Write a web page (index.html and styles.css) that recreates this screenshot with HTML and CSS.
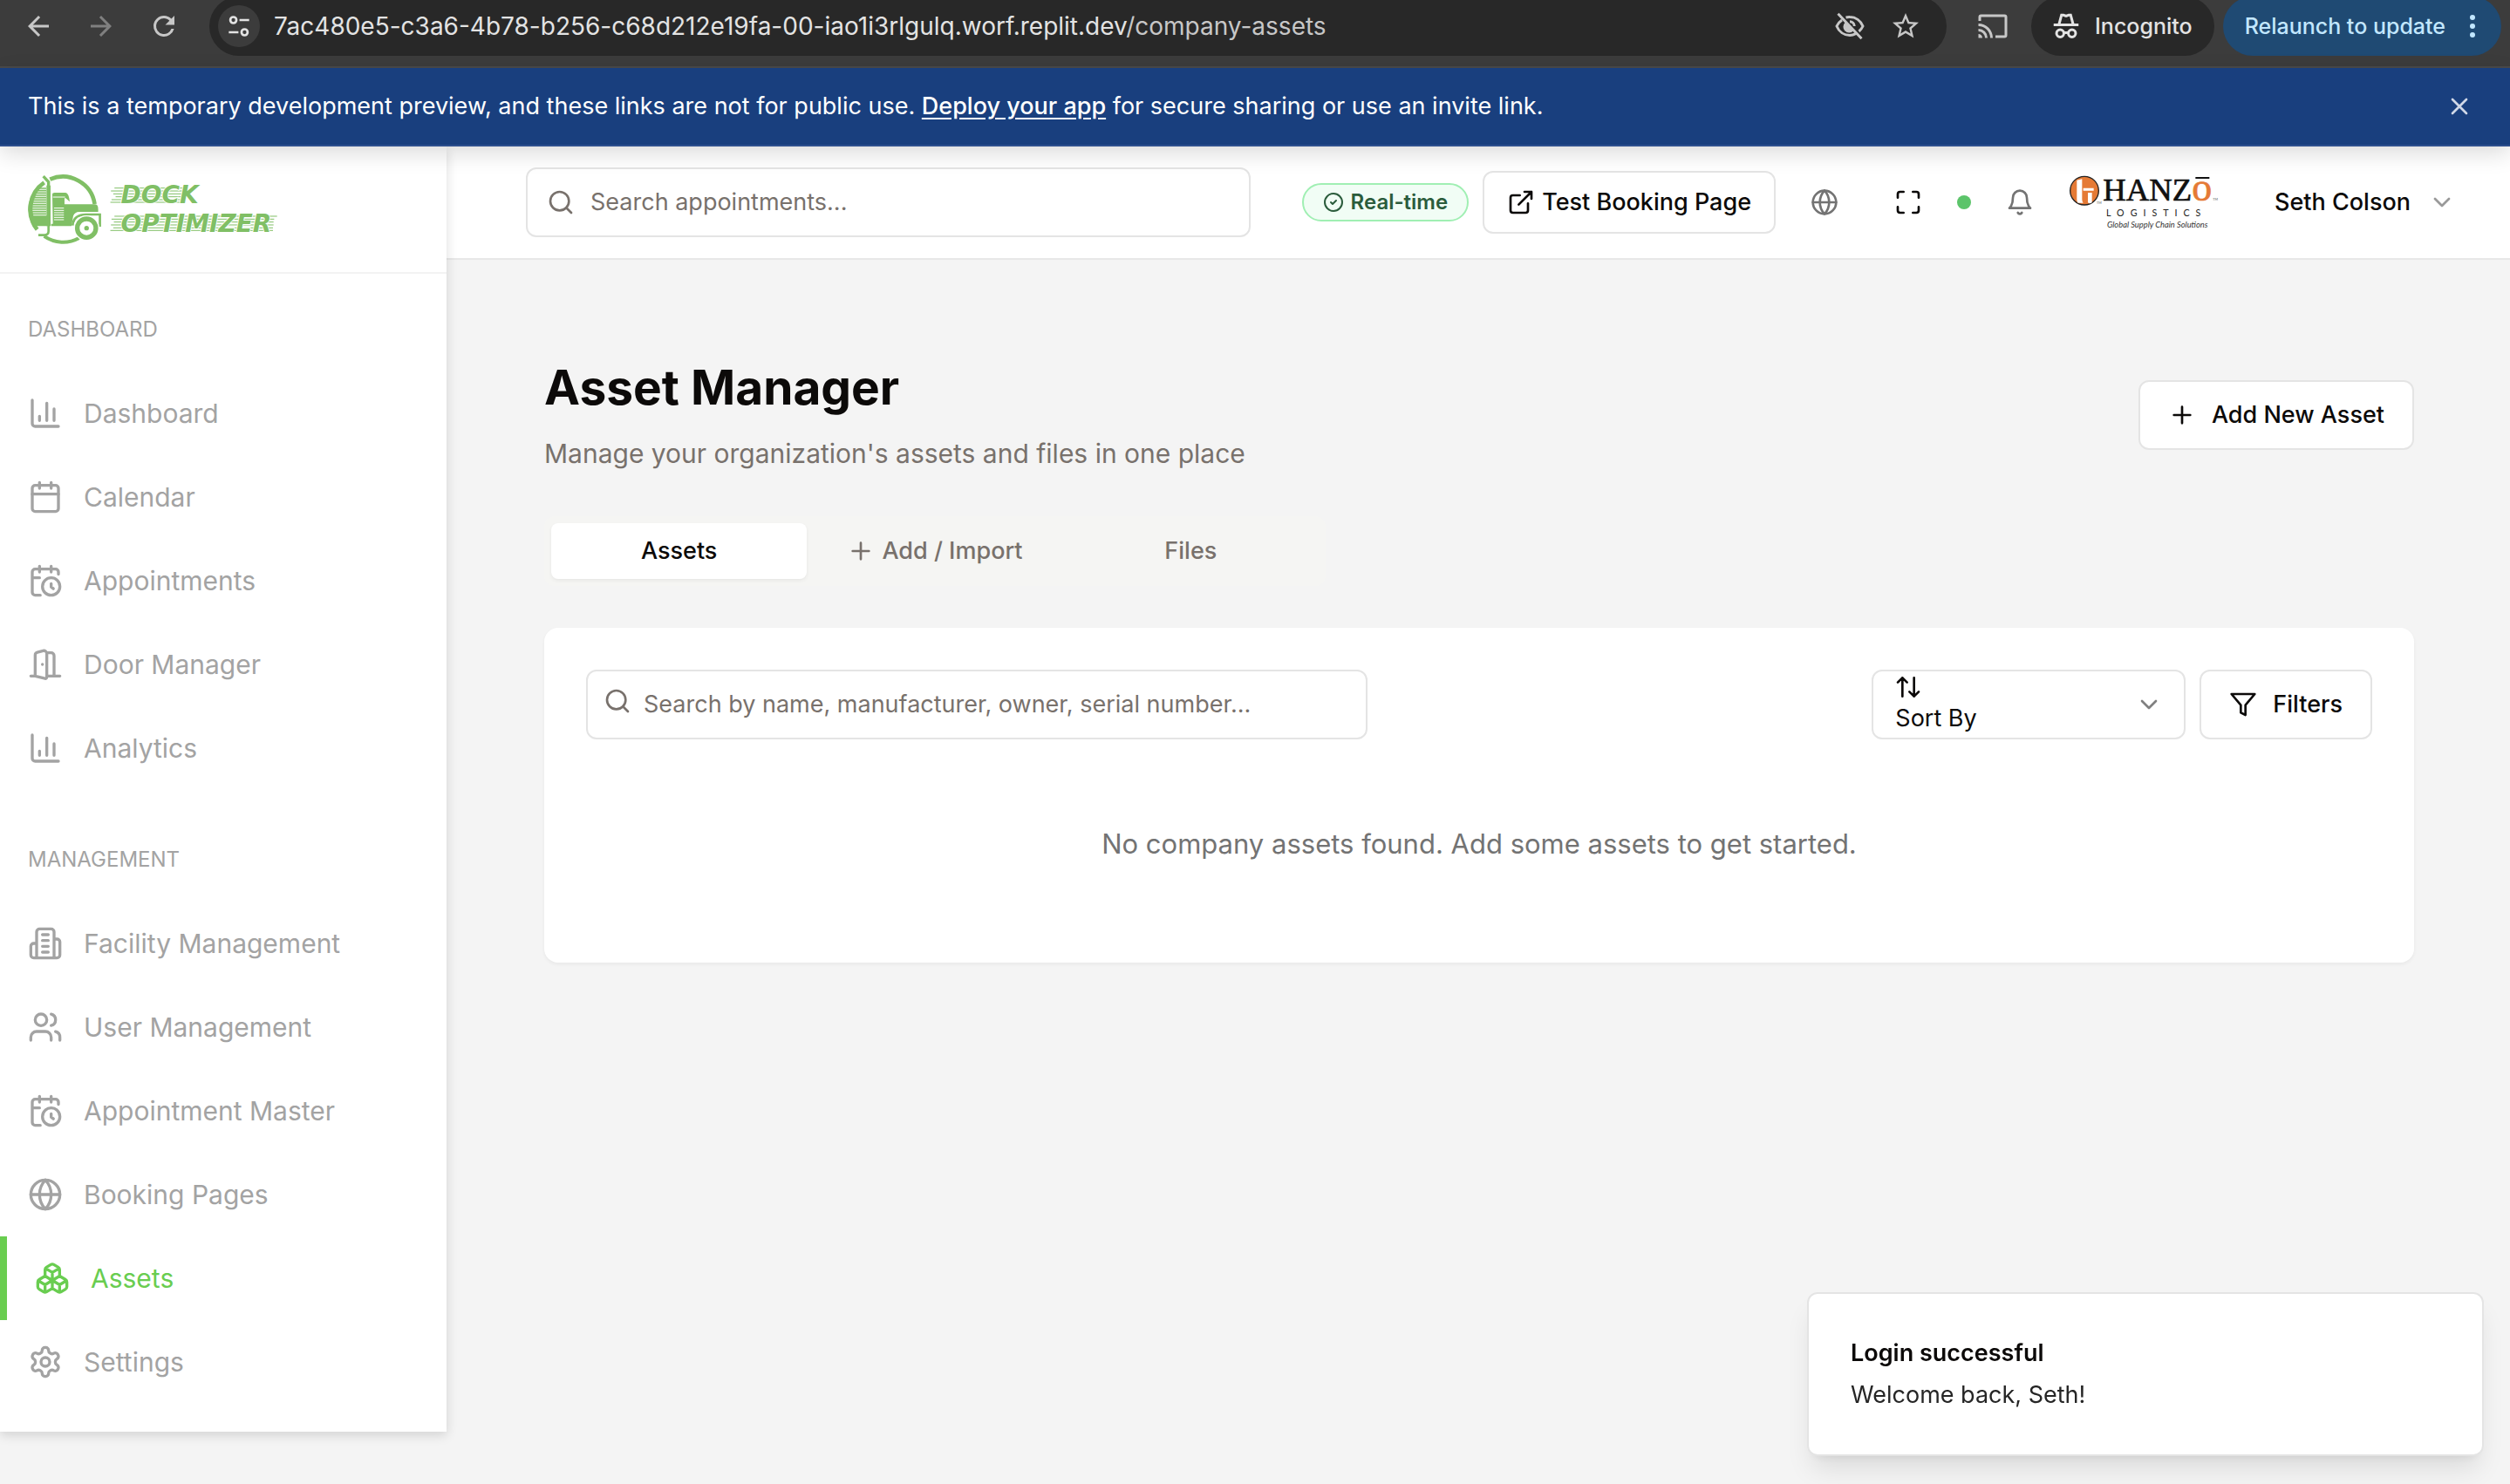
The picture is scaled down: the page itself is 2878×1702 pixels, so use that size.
FILE: index.html
```html
<!DOCTYPE html>
<html lang="en">
<head>
<meta charset="utf-8">
<meta name="viewport" content="width=device-width, initial-scale=1">
<title>Asset Manager</title>
<link rel="stylesheet" href="styles.css">
</head>
<body>
<svg class="sprite" aria-hidden="true">
  <symbol id="chart" viewBox="0 0 24 24"><path d="M3 3v16a2 2 0 0 0 2 2h16M18 17V9M13 17V5M8 17v-3"/></symbol>
  <symbol id="calendar" viewBox="0 0 24 24"><path d="M8 2v4M16 2v4M3 10h18"/><rect x="3" y="4" width="18" height="18" rx="2"/></symbol>
  <symbol id="calendar-clock" viewBox="0 0 24 24"><path d="M21 7.500V6a2 2 0 0 0-2-2H5a2 2 0 0 0-2 2v14a2 2 0 0 0 2 2h3.500M16 2v4M8 2v4M3 10h5M17.500 17.500 16 16.300V14"/><circle cx="16" cy="16" r="6"/></symbol>
  <symbol id="door" viewBox="0 0 24 24"><path d="M13 4h3a2 2 0 0 1 2 2v14M2 20h3M13 20h9M10 12v.01M13 4.562v16.157a1 1 0 0 1-1.242.97L5 20V5.562a2 2 0 0 1 1.515-1.940l4-1A2 2 0 0 1 13 4.561Z"/></symbol>
  <symbol id="building" viewBox="0 0 24 24"><path d="M6 22V4a2 2 0 0 1 2-2h8a2 2 0 0 1 2 2v18ZM6 12H4a2 2 0 0 0-2 2v6a2 2 0 0 0 2 2h2M18 9h2a2 2 0 0 1 2 2v9a2 2 0 0 1-2 2h-2M10 6h4M10 10h4M10 14h4M10 18h4"/></symbol>
  <symbol id="users" viewBox="0 0 24 24"><path d="M16 21v-2a4 4 0 0 0-4-4H6a4 4 0 0 0-4 4v2M22 21v-2a4 4 0 0 0-3-3.870M16 3.130a4 4 0 0 1 0 7.750"/><circle cx="9" cy="7" r="4"/></symbol>
  <symbol id="globe" viewBox="0 0 24 24"><circle cx="12" cy="12" r="10"/><path d="M12 2a14.500 14.500 0 0 0 0 20 14.500 14.500 0 0 0 0-20M2 12h20"/></symbol>
  <symbol id="boxes" viewBox="0 0 24 24"><path d="M2.970 12.920A2 2 0 0 0 2 14.630v3.240a2 2 0 0 0 .97 1.710l3 1.800a2 2 0 0 0 2.060 0L12 19v-5.500l-5-3-4.030 2.420ZM7 16.500l-4.740-2.850M7 16.500l5-3M7 16.500v5.170M12 13.500V19l3.970 2.380a2 2 0 0 0 2.060 0l3-1.800a2 2 0 0 0 .97-1.710v-3.240a2 2 0 0 0-.97-1.710L17 10.500l-5 3ZM17 16.500l-5-3M17 16.500l4.740-2.850M17 16.500v5.170M7.970 4.420A2 2 0 0 0 7 6.130v4.370l5 3 5-3V6.130a2 2 0 0 0-.97-1.710l-3-1.800a2 2 0 0 0-2.060 0l-3 1.800ZM12 8 7.260 5.150M12 8l4.740-2.850M12 13.500V8"/></symbol>
  <symbol id="settings" viewBox="0 0 24 24"><path d="M12.220 2h-.44a2 2 0 0 0-2 2v.18a2 2 0 0 1-1 1.730l-.43.25a2 2 0 0 1-2 0l-.15-.08a2 2 0 0 0-2.730.73l-.22.38a2 2 0 0 0 .73 2.730l.15.1a2 2 0 0 1 1 1.720v.51a2 2 0 0 1-1 1.740l-.15.09a2 2 0 0 0-.73 2.730l.22.38a2 2 0 0 0 2.730.73l.15-.08a2 2 0 0 1 2 0l.43.25a2 2 0 0 1 1 1.730V20a2 2 0 0 0 2 2h.44a2 2 0 0 0 2-2v-.18a2 2 0 0 1 1-1.730l.43-.25a2 2 0 0 1 2 0l.15.08a2 2 0 0 0 2.730-.73l.22-.39a2 2 0 0 0-.73-2.730l-.15-.08a2 2 0 0 1-1-1.740v-.5a2 2 0 0 1 1-1.740l.15-.09a2 2 0 0 0 .73-2.730l-.22-.38a2 2 0 0 0-2.730-.73l-.15.08a2 2 0 0 1-2 0l-.43-.25a2 2 0 0 1-1-1.730V4a2 2 0 0 0-2-2z"/><circle cx="12" cy="12" r="3"/></symbol>
  <symbol id="search" viewBox="0 0 24 24"><circle cx="11" cy="11" r="8"/><path d="m21 21-4.300-4.300"/></symbol>
  <symbol id="check" viewBox="0 0 24 24"><circle cx="12" cy="12" r="10"/><path d="m9 12 2 2 4-4"/></symbol>
  <symbol id="external" viewBox="0 0 24 24"><path d="M15 3h6v6M10 14 21 3M18 13v6a2 2 0 0 1-2 2H5a2 2 0 0 1-2-2V8a2 2 0 0 1 2-2h6"/></symbol>
  <symbol id="maximize" viewBox="0 0 24 24"><path d="M8 3H5a2 2 0 0 0-2 2v3M21 8V5a2 2 0 0 0-2-2h-3M3 16v3a2 2 0 0 0 2 2h3M16 21h3a2 2 0 0 0 2-2v-3"/></symbol>
  <symbol id="bell" viewBox="0 0 24 24"><path d="M6 8a6 6 0 0 1 12 0c0 7 3 9 3 9H3s3-2 3-9M10.300 21a1.940 1.940 0 0 0 3.400 0"/></symbol>
  <symbol id="chevron" viewBox="0 0 24 24"><path d="m6 9 6 6 6-6"/></symbol>
  <symbol id="plus" viewBox="0 0 24 24"><path d="M5 12h14M12 5v14"/></symbol>
  <symbol id="sort" viewBox="0 0 24 24"><path d="m21 16-4 4-4-4M17 20V4M3 8l4-4 4 4M7 4v16"/></symbol>
  <symbol id="filter" viewBox="0 0 24 24"><path d="M22 3H2l8 9.460V19l4 2v-8.540L22 3Z"/></symbol>
  <symbol id="close" viewBox="0 0 24 24"><path d="M18 6 6 18M6 6l12 12"/></symbol>
</svg>

<div class="toolbar">
  <nav class="toolbar-nav" aria-label="Browser">
    <button class="tool" aria-label="Back"><svg class="glyph" viewBox="0 0 24 24"><path d="M20 11H7.830l5.590-5.590L12 4l-8 8 8 8 1.410-1.410L7.830 13H20z"/></svg></button>
    <button class="tool tool-off" aria-label="Forward"><svg class="glyph" viewBox="0 0 24 24"><path d="m12 4-1.410 1.410L16.170 11H4v2h12.170l-5.580 5.590L12 20l8-8z"/></svg></button>
    <button class="tool" aria-label="Reload"><svg class="glyph" viewBox="0 0 24 24"><path d="M17.650 6.350A7.960 7.960 0 0 0 12 4a8 8 0 1 0 7.730 10h-2.080A6 6 0 1 1 12 6c1.660 0 3.140.69 4.220 1.780L13 11h7V4z"/></svg></button>
  </nav>
  <div class="address">
    <button class="site-info" aria-label="Site information"><svg class="glyph-small" viewBox="0 0 24 24" fill="none" stroke="currentColor" stroke-width="2.300"><circle cx="6.500" cy="6" r="3"/><path d="M12.500 6H22M2 18h9.500"/><circle cx="17.500" cy="18" r="3"/></svg></button>
    <div class="url">7ac480e5-c3a6-4b78-b256-c68d212e19fa-00-iao1i3rlgulq.worf.replit.dev<span class="url-path">/company-assets</span></div>
    <button class="tool" aria-label="Tracking protection"><svg class="glyph" viewBox="0 0 24 24" fill="none" stroke="currentColor" stroke-width="2"><path d="M9 5.300A12 12 0 0 1 12 5c4.500 0 8.300 2.800 10 7a11 11 0 0 1-3 4M16.500 17.800A11 11 0 0 1 12 19c-4.500 0-8.300-2.800-10-7a11 11 0 0 1 4-4.700M3 2.500l18 19M12 8.500a3.500 3.500 0 0 1 3.500 3.500"/><path fill="currentColor" d="M9 10a3.500 3.500 0 0 0 5 5z"/></svg></button>
    <button class="tool" aria-label="Bookmark"><svg class="glyph" viewBox="0 0 24 24"><path d="m22 9.240-7.190-.62L12 2 9.190 8.630 2 9.240l5.460 4.730L5.820 21 12 17.270 18.180 21l-1.630-7.030zM12 15.400l-3.760 2.270 1-4.280-3.320-2.880 4.380-.38L12 6.100l1.710 4.040 4.380.38-3.320 2.880 1 4.280z"/></svg></button>
  </div>
  <button class="tool cast" aria-label="Cast"><svg class="glyph" viewBox="0 0 24 24"><path d="M21 3H3a2 2 0 0 0-2 2v3h2V5h18v14h-7v2h7a2 2 0 0 0 2-2V5a2 2 0 0 0-2-2M1 18v3h3a3 3 0 0 0-3-3m0-4v2a5 5 0 0 1 5 5h2a7 7 0 0 0-7-7m0-4v2a9 9 0 0 1 9 9h2A11 11 0 0 0 1 10"/></svg></button>
  <div class="incognito">
    <svg class="glyph" viewBox="0 0 24 24" fill="none" stroke="currentColor" stroke-width="2"><path d="M2.500 11h19M6.500 11 8.500 3.500h1.500l2 .8 2-.8h1.500l2 7.500"/><circle cx="7.500" cy="17.500" r="2.800"/><circle cx="16.500" cy="17.500" r="2.800"/><path d="M10 17h4"/></svg>
    <span>Incognito</span>
  </div>
  <button class="relaunch"><span>Relaunch to update</span><svg class="dots" viewBox="0 0 6 28"><circle cx="3" cy="4" r="3"/><circle cx="3" cy="14" r="3"/><circle cx="3" cy="24" r="3"/></svg></button>
</div>

<div class="banner">
  <p>This is a temporary development preview, and these links are not for public use. <a href="#">Deploy your app</a> for secure sharing or use an invite link.</p>
  <button class="banner-close" aria-label="Dismiss"><svg class="icon"><use href="#close"/></svg></button>
</div>

<div class="app">
  <aside class="sidebar">
    <div class="brand">
      <svg class="brand-logo" viewBox="36 60 880 240" role="img" aria-label="Dock Optimizer">
        <g fill="none" stroke="currentColor">
          <path stroke-width="14" d="M112 77A111 111 0 0 1 266 162M92 88A112 112 0 0 0 68 250"/>
          <path stroke-width="12" d="M92 273A113 113 0 0 0 212 279"/>
          <path stroke-width="14" d="M56 132A108 108 0 0 0 62 238"/>
          <path stroke-width="5" d="M72 108h27M66 116h33M60 124h39M56 132h43M54 140h45M52 148h47M50 156h49M50 164h49M50 172h49M50 180h49M50 188h49M50 196h49"/>
          <path stroke-width="10" d="m89 66 18 20v14"/>
          <path stroke-width="14" d="M107 98v140"/>
          <path stroke-width="8" d="M107 236v20q0 12-14 13H72"/>
        </g>
        <path fill="currentColor" d="M44 202h58v36H58Zm76-72q0-7 8-7h36q10 0 14 18l2 13-14-12h-4v21h104q12 0 12 16v10h-66q-14 0-20 14l-6 35h-70v-8h6Z"/>
        <path stroke="#fff" stroke-width="3" fill="none" d="M126 176h34M126 184h34M126 192h34M126 200h34M126 208h34M126 216h34M122 138h42"/>
        <path fill="none" stroke="currentColor" stroke-width="8" d="M190 236q2-37 46-38h48v42"/>
        <circle cx="238" cy="245" r="44" fill="#fff"/>
        <circle cx="238" cy="245" r="32" fill="none" stroke="currentColor" stroke-width="16"/>
        <circle cx="238" cy="245" r="8" fill="currentColor"/>
        <path stroke="currentColor" stroke-width="3" d="M334 107h250M322 117h255M330 127h245M338 137h230M324 147h240M320 156h245M334 204h560M324 214h560M332 224h550M322 234h560M330 244h550M320 253h560"/>
        <text class="brand-text" x="356" y="160">DOCK</text>
        <text class="brand-text" x="356" y="259">OPTIMIZER</text>
      </svg>
    </div>
    <nav class="menu" aria-label="Main">
      <h2 class="menu-title">DASHBOARD</h2>
      <a class="menu-item" href="#"><svg class="icon"><use href="#chart"/></svg>Dashboard</a>
      <a class="menu-item" href="#"><svg class="icon"><use href="#calendar"/></svg>Calendar</a>
      <a class="menu-item" href="#"><svg class="icon"><use href="#calendar-clock"/></svg>Appointments</a>
      <a class="menu-item" href="#"><svg class="icon"><use href="#door"/></svg>Door Manager</a>
      <a class="menu-item" href="#"><svg class="icon"><use href="#chart"/></svg>Analytics</a>
    </nav>
    <nav class="menu" aria-label="Management">
      <h2 class="menu-title">MANAGEMENT</h2>
      <a class="menu-item" href="#"><svg class="icon"><use href="#building"/></svg>Facility Management</a>
      <a class="menu-item" href="#"><svg class="icon"><use href="#users"/></svg>User Management</a>
      <a class="menu-item" href="#"><svg class="icon"><use href="#calendar-clock"/></svg>Appointment Master</a>
      <a class="menu-item" href="#"><svg class="icon"><use href="#globe"/></svg>Booking Pages</a>
      <a class="menu-item active" href="#" aria-current="page"><svg class="icon"><use href="#boxes"/></svg>Assets</a>
      <a class="menu-item" href="#"><svg class="icon"><use href="#settings"/></svg>Settings</a>
    </nav>
  </aside>

  <div class="page">
    <header class="topbar">
      <label class="field top-search">
        <svg class="icon"><use href="#search"/></svg>
        <input type="search" placeholder="Search appointments..." aria-label="Search appointments">
      </label>
      <span class="badge"><svg class="icon"><use href="#check"/></svg>Real-time</span>
      <button class="btn booking"><svg class="icon"><use href="#external"/></svg>Test Booking Page</button>
      <button class="icon-btn muted" aria-label="Language"><svg class="icon"><use href="#globe"/></svg></button>
      <button class="icon-btn" aria-label="Full screen"><svg class="icon"><use href="#maximize"/></svg></button>
      <span class="status" role="img" aria-label="Online"></span>
      <button class="icon-btn muted" aria-label="Notifications"><svg class="icon"><use href="#bell"/></svg></button>
      <svg class="tenant" viewBox="96 60 564 192" role="img" aria-label="Hanzo Logistics">
        <circle cx="150" cy="116" r="49" fill="#e57a35" stroke="#222" stroke-width="4"/>
        <path fill="#fff" d="M124 80l18-4v70q0 8 4 12h-18q-4-4-4-12Zm22 27h36v9h-36Zm16 16h14v34q-8 6-14 0Z"/>
        <text class="tenant-tm" x="192" y="162">TM</text>
        <text class="tenant-name" x="214" y="151">HANZ</text>
        <text class="tenant-o" x="520" y="151">o</text>
        <path fill="#111" d="M532 69h48v6h-48z"/>
        <text class="tenant-tm" x="592" y="151">TM</text>
        <text class="tenant-sub" x="225" y="203">LOGISTICS</text>
        <text class="tenant-tag" x="228" y="242">Global Supply Chain Solutions</text>
      </svg>
      <button class="user">Seth Colson<svg class="icon"><use href="#chevron"/></svg></button>
    </header>

    <main class="content">
      <div class="heading">
        <div class="heading-text">
          <h1>Asset Manager</h1>
          <p>Manage your organization's assets and files in one place</p>
        </div>
        <button class="btn"><svg class="icon"><use href="#plus"/></svg>Add New Asset</button>
      </div>

      <div class="tabs" role="tablist">
        <button class="tab selected" role="tab" aria-selected="true">Assets</button>
        <button class="tab" role="tab" aria-selected="false"><svg class="icon"><use href="#plus"/></svg>Add / Import</button>
        <button class="tab" role="tab" aria-selected="false">Files</button>
      </div>

      <section class="card">
        <div class="filters">
          <label class="field asset-search">
            <svg class="icon"><use href="#search"/></svg>
            <input type="search" placeholder="Search by name, manufacturer, owner, serial number..." aria-label="Search assets">
          </label>
          <div class="sort">
            <select aria-label="Sort by"><option>Sort By</option></select>
            <svg class="icon sort-icon"><use href="#sort"/></svg>
            <svg class="icon sort-chevron"><use href="#chevron"/></svg>
          </div>
          <button class="btn"><svg class="icon"><use href="#filter"/></svg>Filters</button>
        </div>
        <p class="empty">No company assets found. Add some assets to get started.</p>
      </section>
    </main>
  </div>
</div>

<div class="toast" role="status">
  <strong>Login successful</strong>
  <span>Welcome back, Seth!</span>
</div>
</body>
</html>
```
FILE: styles.css
```css
* {
  box-sizing: border-box;
}

body {
  margin: 0;
  min-height: 100vh;
  background: #f4f4f4;
  color: #0c0a09;
  font: 400 27px/40px Inter, "Liberation Sans", sans-serif;
}

h1, h2, p {
  margin: 0;
}

button, input, select {
  margin: 0;
  padding: 0;
  border: 0;
  background: none;
  color: inherit;
  font: inherit;
}

a {
  color: inherit;
}

.sprite {
  display: none;
}

.icon {
  flex: none;
  width: 32px;
  height: 32px;
  fill: none;
  stroke: currentColor;
  stroke-width: 2;
  stroke-linecap: round;
  stroke-linejoin: round;
}

/* Browser toolbar: its rounded pills run past the top edge */
.toolbar {
  display: flex;
  align-items: flex-start;
  height: 78px;
  padding: 0 10px 0 26px;
  overflow: hidden;
  border-bottom: 2px solid #4a4a4a;
  background: #3c3c3c;
  color: #c7c7c7;
  font-size: 25px;
  font-weight: 500;
}

.toolbar > * {
  height: 68px;
  margin-top: -4px;
}

.toolbar-nav {
  display: flex;
  align-items: center;
  gap: 36px;
}

.tool {
  display: flex;
  align-items: center;
  width: 36px;
}

.tool-off {
  color: #808080;
}

.glyph {
  width: 36px;
  height: 36px;
  fill: currentColor;
}

.glyph[fill="none"] {
  fill: none;
}

.address {
  display: flex;
  flex: 1;
  align-items: center;
  gap: 28px;
  min-width: 0;
  margin-left: 34px;
  padding: 0 29px 0 10px;
  border-radius: 34px;
  background: #282828;
}

.site-info {
  display: flex;
  flex: none;
  align-items: center;
  justify-content: center;
  width: 48px;
  height: 48px;
  margin-right: -12px;
  border-radius: 50%;
  background: #3c3c3c;
  color: #e3e3e3;
}

.glyph-small {
  width: 28px;
  height: 28px;
}

.url {
  flex: 1;
  overflow: hidden;
  color: #e3e3e3;
  font-size: 28px;
  font-weight: 400;
  white-space: nowrap;
}

.url-path {
  color: #c7c7c7;
}

.cast {
  margin-left: 35px;
}

.incognito {
  display: flex;
  align-items: center;
  gap: 15px;
  margin-left: 26px;
  padding: 0 25px 0 22px;
  border-radius: 34px;
  background: #282828;
  color: #e3e3e3;
}

.relaunch {
  display: flex;
  align-items: center;
  gap: 28px;
  margin-left: 10px;
  padding: 0 30px 0 25px;
  border-radius: 34px;
  background: #1f4a73;
  color: #c2e7ff;
}

.dots {
  width: 6px;
  height: 28px;
  fill: currentColor;
}

/* Preview notice */
.banner {
  position: relative;
  z-index: 3;
  display: flex;
  align-items: center;
  justify-content: space-between;
  height: 90px;
  padding: 0 42px 0 32px;
  border-bottom: 2px solid #2d4f8e;
  background: #193f7e;
  box-shadow: 0 8px 24px rgb(0 0 0 / 14%);
  color: #fff;
}

.banner a {
  font-weight: 500;
  text-underline-offset: 4px;
}

.banner-close {
  display: flex;
  color: #d0d8e8;
}

/* App frame */
.app {
  display: grid;
  grid-template-columns: 512px minmax(0, 1fr);
  align-items: start;
}

.sidebar {
  position: relative;
  z-index: 2;
  padding-bottom: 32px;
  background: #fff;
  box-shadow: 0 4px 12px rgb(0 0 0 / 14%);
  color: #a3a3a3;
}

.brand {
  display: flex;
  align-items: center;
  height: 146px;
  padding: 0 32px;
  border-bottom: 2px solid #f3f3f3;
}

.brand-logo {
  width: 293px;
  height: 80px;
  color: #80bf65;
}

.brand-text {
  fill: currentColor;
  stroke: #fff;
  stroke-width: 5px;
  paint-order: stroke;
  font: italic 700 84px "DejaVu Sans", sans-serif;
}

.menu {
  padding-top: 48px;
}

.menu + .menu {
  padding-top: 64px;
}

.menu-title {
  padding: 0 32px;
  margin-bottom: 32px;
  font-size: 24px;
  font-weight: 400;
  line-height: 32px;
}

.menu-item {
  display: flex;
  align-items: center;
  gap: 24px;
  height: 96px;
  padding: 0 32px;
  font-size: 30px;
  text-decoration: none;
}

.menu-item .icon {
  width: 40px;
  height: 40px;
}

.menu-item.active {
  border-left: 8px solid #69cd50;
  color: #69cd50;
}

/* The header runs 2px below its 128px row for the rule */
.topbar {
  display: flex;
  align-items: center;
  gap: 16px;
  height: 130px;
  padding: 0 30px 0 91px;
  border-bottom: 2px solid #e7e7e7;
  background: #fff;
}

.field {
  display: flex;
  align-items: center;
  gap: 16px;
  height: 80px;
  border: 2px solid #e4e4e4;
  border-radius: 12px;
  background: #fff;
  color: #78716c;
}

.field input {
  flex: 1;
  min-width: 0;
  outline: 0;
  appearance: none;
}

.field input::placeholder {
  color: #78716c;
  opacity: 1;
}

.top-search {
  flex: 1;
  margin-right: 43px;
  padding: 0 22px;
  gap: 18px;
}

.btn {
  display: flex;
  flex: none;
  align-items: center;
  gap: 18px;
  height: 80px;
  padding: 0 32px;
  border: 2px solid #e4e4e4;
  border-radius: 12px;
  background: #fff;
  font-weight: 500;
  white-space: nowrap;
}

.booking {
  gap: 8px;
  height: 72px;
  padding: 0 26px;
}

.badge {
  display: flex;
  flex: none;
  align-items: center;
  gap: 8px;
  height: 44px;
  padding: 0 22px;
  border: 2px solid #a0efb3;
  border-radius: 22px;
  background: #f1fdf5;
  color: #2b5c3c;
  font-size: 24px;
  font-weight: 600;
}

.badge .icon {
  width: 24px;
  height: 24px;
}

.icon-btn {
  display: flex;
  flex: none;
  align-items: center;
  justify-content: center;
  width: 80px;
  height: 80px;
}

.muted {
  color: #737373;
}

.status {
  flex: none;
  width: 16px;
  height: 16px;
  border-radius: 50%;
  background: #5cc46a;
}

.tenant {
  flex: none;
  width: 188px;
  height: 64px;
  overflow: visible;
}

.tenant-name {
  fill: #111;
  stroke: #111;
  stroke-width: 2px;
  font: 400 110px "Liberation Serif", serif;
}

.tenant-o {
  fill: #e57a35;
  stroke: #e57a35;
  stroke-width: 2px;
  font: 400 138px "Liberation Serif", serif;
}

.tenant-sub {
  fill: #222;
  font: 400 32px Lato, sans-serif;
  letter-spacing: 21px;
}

.tenant-tag {
  fill: #333;
  font: italic 400 28px Lato, sans-serif;
}

.tenant-tm {
  fill: #555;
  font: 400 11px Lato, sans-serif;
}

.user {
  display: flex;
  flex: none;
  align-items: center;
  gap: 20px;
  padding: 0 32px;
  font-weight: 500;
}

.user .icon {
  color: #999;
}

/* Asset manager */
.content {
  display: grid;
  gap: 48px;
  padding: 110px 110px 64px 112px;
}

.heading {
  display: flex;
  align-items: center;
  justify-content: space-between;
}

.heading-text {
  display: grid;
  gap: 16px;
}

.heading h1 {
  font-size: 55px;
  font-weight: 700;
  line-height: 72px;
}

.heading p {
  color: #78716c;
  font-size: 30px;
  line-height: 48px;
}

.tabs {
  display: grid;
  grid-template-columns: repeat(3, 1fr);
  width: 896px;
  max-width: 100%;
  padding: 8px;
  border-radius: 12px;
  background: #f5f5f3;
}

.tab {
  display: flex;
  align-items: center;
  justify-content: center;
  gap: 8px;
  height: 64px;
  border-radius: 8px;
  color: #78716c;
  font-weight: 500;
}

.tab.selected {
  background: #fff;
  box-shadow: 0 2px 4px rgb(0 0 0 / 6%);
  color: #0c0a09;
}

.card {
  padding: 48px;
  border-radius: 16px;
  background: #fff;
  box-shadow: 0 2px 4px rgb(0 0 0 / 5%);
}

.filters {
  display: flex;
  gap: 16px;
}

.asset-search {
  width: 896px;
  margin-right: auto;
  padding: 0 18px;
  gap: 14px;
}

.asset-search .icon {
  align-self: flex-start;
  margin-top: 18px;
}

.sort {
  position: relative;
  width: 360px;
}

.sort select {
  width: 100%;
  height: 80px;
  padding: 32px 26px 0 25px;
  border: 2px solid #e4e4e4;
  border-radius: 12px;
  background: #fff;
  appearance: none;
}

.sort .icon {
  position: absolute;
  pointer-events: none;
}

.sort-icon {
  top: 4px;
  left: 26px;
}

.sort-chevron {
  top: 24px;
  right: 26px;
  color: #808080;
}

.empty {
  padding: 96px 0 64px;
  color: #737373;
  font-size: 31px;
  line-height: 48px;
  text-align: center;
}

/* Notification over the page */
.toast {
  position: fixed;
  right: 30px;
  bottom: 32px;
  z-index: 4;
  display: grid;
  gap: 8px;
  width: 776px;
  padding: 48px;
  border: 2px solid #e4e4e4;
  border-radius: 12px;
  background: #fff;
  box-shadow: 0 20px 30px -6px rgb(0 0 0 / 10%), 0 8px 12px -8px rgb(0 0 0 / 10%);
}

.toast strong {
  font-weight: 600;
}

.toast span {
  color: #262626;
}
```
